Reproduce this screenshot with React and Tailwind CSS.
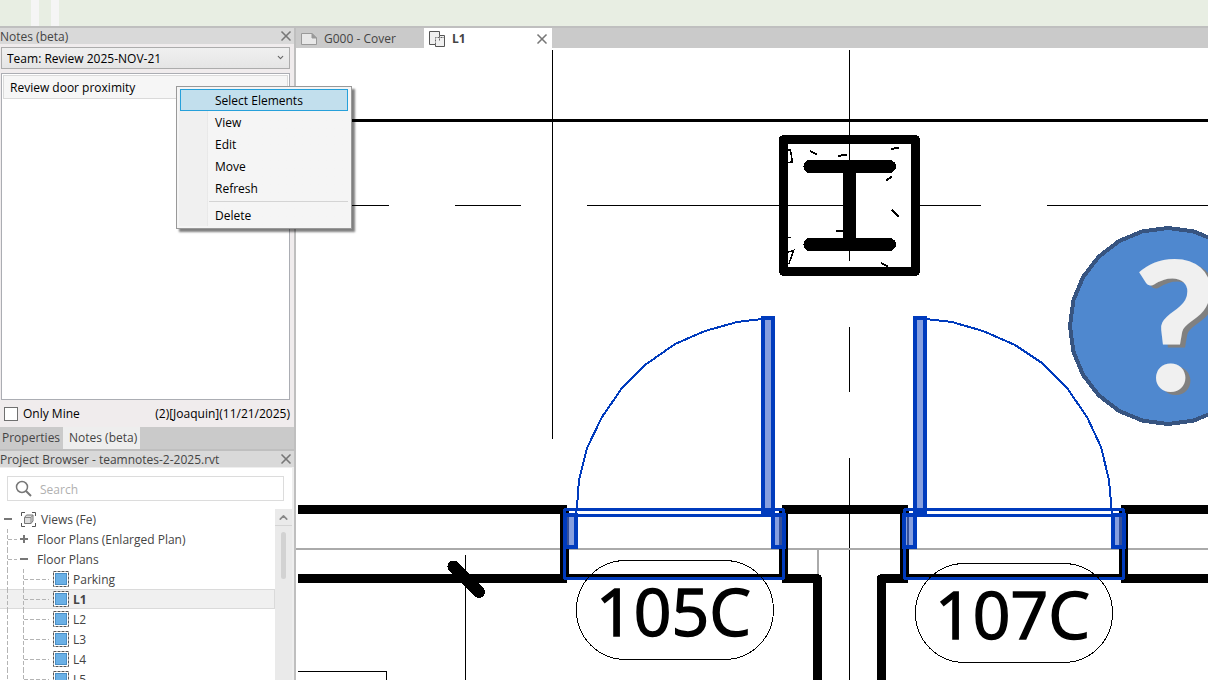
import { useState } from "react";
import { X, ChevronDown, ChevronUp } from "lucide-react";

const MENU_ITEMS = ["Select Elements", "View", "Edit", "Move", "Refresh"];

const LEVELS = ["Parking", "L1", "L2", "L3", "L4", "L5"];

const DOORS = [
  {
    id: "105C",
    x: 565,
    leafX: 763,
    leftJamb: 565,
    arc: "762,319 737,322 705,331 675,344 645,365 622,388 602,417 587,448 579,480 577,507 576,514",
    tagX: 576.5,
    tagY: 560.5,
  },
  {
    id: "107C",
    x: 905,
    leafX: 915,
    leftJamb: 904,
    arc: "926,319 952,322 983,331 1015,345 1042,363 1067,388 1087,417 1101,447 1109,480 1112,514",
    tagX: 915.5,
    tagY: 563.5,
  },
];

const MARKER_POINTS = Array.from({ length: 24 }, (_, i) => {
  const a = (i * Math.PI) / 12;
  return `${(1168 + 98 * Math.cos(a)).toFixed(1)},${(326 + 98 * Math.sin(a)).toFixed(1)}`;
}).join(" ");

function PanelTitle({ children }) {
  return (
    <div className="h-4 shrink-0 flex items-center justify-between bg-[#d9d9d9]">
      <h2 className="whitespace-nowrap pt-px text-[#444]">{children}</h2>
      <button aria-label="Close panel" className="text-[#777]">
        <X size={16} strokeWidth={2.5} />
      </button>
    </div>
  );
}

function ContextMenu() {
  return (
    <div
      role="menu"
      className="absolute left-44 top-[58px] z-20 w-[176px] border border-[#999] bg-[#f5f5f5] p-[2px] pr-[3px] shadow-[3px_3px_2px_rgba(0,0,0,0.5)]"
    >
      <div className="bg-linear-to-r from-[#f0f0f0] from-[28px] via-[#dcdcdc] via-[28px] to-[#f5f5f5] to-[29px] pl-px">
        {MENU_ITEMS.map((item, i) => (
          <button
            key={item}
            role="menuitem"
            className={
              i === 0
                ? "block h-[22px] w-full border border-[#26a0da] bg-[#c2dfed] pt-px pl-[34px] text-left"
                : "block h-[22px] w-full border border-transparent pt-px pl-[34px] text-left"
            }
          >
            {item}
          </button>
        ))}
        <div className="ml-[29px] my-[2px] h-px bg-[#d4d4d4]" />
        <button
          role="menuitem"
          className="block h-[22px] w-full border border-transparent pt-px pl-[34px] text-left"
        >
          Delete
        </button>
      </div>
    </div>
  );
}

function NotesPanel() {
  const [onlyMine, setOnlyMine] = useState(false);

  return (
    <section className="shrink-0">
      <PanelTitle>Notes (beta)</PanelTitle>
      <div className="bg-[#f0eced] px-px pt-[3px] pr-1">
        <div className="relative">
          <select
            aria-label="Note list"
            className="block h-[22px] w-full appearance-none border border-[#acacac] bg-linear-to-b from-[#f0f0f0] to-[#e5e5e5] pt-px pl-[5px] text-black"
          >
            <option>Team: Review 2025-NOV-21</option>
          </select>
          <ChevronDown
            size={9}
            strokeWidth={3}
            className="pointer-events-none absolute right-[5px] top-[6px] text-[#666]"
          />
        </div>
        <ul className="mt-1 h-[327px] border border-[#abadb3] bg-white p-px text-black">
          <li className="flex h-6 items-center border border-[#dadada] bg-[#f6f6f6] pt-px pl-[6px]">
            Review door proximity
          </li>
        </ul>
        <div className="flex h-[27px] items-center justify-between pl-[3px] text-black">
          <label className="flex items-center gap-[5px]">
            <input
              type="checkbox"
              checked={onlyMine}
              onChange={(e) => setOnlyMine(e.target.checked)}
              className="h-[14px] w-[14px] appearance-none border border-[#707070] bg-white checked:bg-[#26a0da]"
            />
            Only Mine
          </label>
          <span>(2)[Joaquin](11/21/2025)</span>
        </div>
      </div>
      <div className="flex h-[22px] bg-[#cacaca] text-[#444]">
        <button className="w-[63px] pl-[2px] text-left">Properties</button>
        <button className="w-[77px] bg-[#eee] pl-[6px] text-left">
          Notes (beta)
        </button>
      </div>
    </section>
  );
}

function Dash({ d }) {
  return <path d={d} stroke="#b4b4b4" strokeDasharray="4 2" fill="none" />;
}

function LevelRow({ name, active }) {
  return (
    <li
      className={
        active
          ? "flex h-5 items-center border border-l-0 border-[#dadada] bg-[#f0f0f0] font-bold"
          : "flex h-5 items-center border border-l-0 border-transparent"
      }
    >
      <svg width="53" height="20" className="shrink-0" aria-hidden="true">
        <Dash d="M7.5 0V20" />
        <Dash d="M23.5 0V20" />
        <Dash d="M24 10.5H49" />
      </svg>
      <svg width="16" height="16" className="mr-1 shrink-0" aria-hidden="true">
        <rect x="0.5" y="0.5" width="15" height="15" fill="#fff" stroke="#555" strokeDasharray="3 1" />
        <rect x="2.5" y="2.5" width="11" height="11" fill="#6ab0e6" stroke="#4a8ec4" />
      </svg>
      <span className="pt-[2px]">{name}</span>
    </li>
  );
}

function ProjectBrowser() {
  return (
    <section className="flex min-h-0 flex-1 flex-col border-t-2 border-[#bfbfbf]">
      <PanelTitle>Project Browser - teamnotes-2-2025.rvt</PanelTitle>
      <div className="flex min-h-0 flex-1 flex-col border-r-2 border-t border-[#eee] bg-white">
        <div className="pt-2 pl-[7px] pr-2">
          <label className="flex h-[25px] items-center gap-2 border border-[#dcdcdc] pl-[7px]">
            {/* lens is wider than the handle is long */}
            <svg width="17" height="17" viewBox="0 0 17 17" fill="none" stroke="#777" aria-hidden="true">
              <circle cx="7" cy="7" r="5.500" strokeWidth="1.500" />
              <path d="M11 11l5 5" strokeWidth="2" />
            </svg>
            <input
              type="text"
              aria-label="Search project"
              placeholder="Search"
              className="min-w-0 flex-1 pt-[2px] outline-none placeholder:text-[#b0b0b0]"
            />
          </label>
        </div>
        <div className="mt-2 flex min-h-0 flex-1 overflow-hidden">
          <ul className="min-w-0 flex-1 text-[#444]">
            <li className="flex h-5 items-center">
              <svg width="21" height="20" aria-hidden="true">
                <path d="M4 10H12" stroke="#777" strokeWidth="2" />
              </svg>
              <svg width="15" height="15" className="mr-[5px]" aria-hidden="true">
                <path
                  d="M4 .5H.5V4M11 .5h3.500V4M4 14.500H.5V11M11 14.500h3.500V11"
                  stroke="#555"
                  fill="none"
                />
                <path d="M3.500 5.500l2-2.500h6.500v6l-2 2.500H3.500z" fill="#ddd" stroke="#777" />
                <path d="M3.500 5.500H10v6M10 5.500l2-2.500" fill="none" stroke="#888" />
              </svg>
              <span className="pt-[2px]">Views (Fe)</span>
            </li>
            <li className="flex h-5 items-center">
              <svg width="37" height="20" aria-hidden="true">
                <Dash d="M7.5 0V20" />
                <Dash d="M8 10.5H17" />
                <path d="M20 10H28M24 6V14" stroke="#777" strokeWidth="2" />
              </svg>
              <span className="pt-[2px]">Floor Plans (Enlarged Plan)</span>
            </li>
            <li className="flex h-5 items-center">
              <svg width="37" height="20" aria-hidden="true">
                <Dash d="M7.5 0V20" />
                <Dash d="M8 10.5H17" />
                <path d="M20 10H28" stroke="#777" strokeWidth="2" />
              </svg>
              <span className="pt-[2px]">Floor Plans</span>
            </li>
            {LEVELS.map((name) => (
              <LevelRow key={name} name={name} active={name === "L1"} />
            ))}
          </ul>
          <div className="flex w-[17px] flex-col items-center bg-[#eaeaea]">
            <button
              aria-label="Scroll up"
              className="flex h-[17px] w-full shrink-0 items-center justify-center border-b border-[#d4d4d4] text-[#888]"
            >
              <ChevronUp size={13} strokeWidth={3} />
            </button>
            <div className="mt-[6px] h-[47px] w-[5px] shrink-0 rounded-full bg-[#d2d2d2]" />
          </div>
        </div>
      </div>
    </section>
  );
}

function Door({ door }) {
  const { x, leafX, leftJamb, arc, tagX, tagY, id } = door;
  return (
    <g>
      {/* wall returns and sill */}
      <rect x={x - 5} y="508" width="9" height="72" fill="#000" />
      <rect x={x + 214} y="508" width="9" height="72" fill="#000" />
      <rect x={x} y="574" width="218" height="4" fill="#000" />
      <g stroke="#003bbd" strokeWidth="4">
        <rect x={leafX} y="318" width="10" height="195" fill="#869fdf" />
        <rect x={leftJamb} y="515" width="11" height="32" fill="#869fdf" />
        <rect x={x + 208} y="515" width="11" height="32" fill="#869fdf" />
      </g>
      <rect x={x + 2} y="517" width="2" height="28" fill="#35509a" />
      <rect x={x + 214} y="517" width="3" height="28" fill="#35509a" />
      <g stroke="#003bbd" strokeWidth="3" fill="none">
        <rect x={x - 0.5} y="509.5" width="219" height="69" rx="1" />
        <path d={`M${x - 1} 515.5H${x + 221}`} />
        <polyline points={arc} strokeWidth="2" />
      </g>
      <rect x={tagX} y={tagY} width="197" height="99" rx="49" fill="none" stroke="#000" />
      <text
        x={tagX + 97}
        y={tagY + 75}
        textAnchor="middle"
        fontSize="66"
        fill="#000"
        stroke="#000"
        strokeWidth="1.500"
      >
        {id}
      </text>
    </g>
  );
}

function PlanCanvas() {
  return (
    <svg
      className="block h-full w-full"
      role="img"
      aria-label="L1 floor plan"
      shapeRendering="crispEdges"
    >
      <g transform="translate(-296 -48)">
        {/* grids */}
        <g stroke="#000" fill="none">
          <path d="M298 120.5H3000" strokeWidth="3" />
          <path d="M552.5 50V439M849.5 50V261M849.5 327V392M849.5 458V3000" />
          <path d="M323 205.5H389M455 205.5H521M587 205.5H844M915 205.5H981M1047 205.5H3000" />
          <path d="M465.500 555V3000M298 671.500H386.500V3000" />
        </g>

        {/* column */}
        <rect x="783.5" y="139.5" width="132" height="132" fill="none" stroke="#000" strokeWidth="9" strokeLinejoin="round" />
        <g stroke="#000" strokeWidth="13" strokeLinecap="round">
          <path d="M810 166.500H889.500M810 244.500H889.500" />
          <path d="M849.500 170V240" strokeLinecap="butt" />
        </g>
        <g stroke="#000" strokeWidth="2" fill="none">
          <path d="M788 150h2.500l2 12-4.500.500" strokeWidth="1.500" />
          <path d="M810 151l7 3.500M838 156l9-1.500M891 149l8-1.500M886 180.500l6-4M892 210l7 7M836 231.500l7-1M881 263l7 3.500" />
          <path d="M787 237.500h4M788 252l5.500-1.500-4.500 13-2-.500M793.500 250.500v-1" strokeWidth="1.500" />
        </g>

        {/* walls */}
        <path d="M296 549H3000M818 549V575" stroke="#aaa" strokeWidth="2" />
        <g stroke="#000" strokeWidth="9" fill="none" strokeLinejoin="round">
          <path d="M298 509.500H567M782 509.500H908M1121 509.500H3000" />
          <path d="M298 578.500H567M782 578.500H817.500V3000M908 578.500H881.500V3000M1121 578.500H3000" />
        </g>
        <path d="M453.500 566.500L479 592" stroke="#000" strokeWidth="12" strokeLinecap="round" />

        {DOORS.map((door) => (
          <Door key={door.id} door={door} />
        ))}

        {/* question marker */}
        <polygon points={MARKER_POINTS} fill="#4f88cf" stroke="#375480" strokeWidth="4" />
        <text
          x="1175"
          y="391"
          fontSize="180"
          textAnchor="middle"
          fill="#f0f0f0"
          className="font-['Lato',sans-serif] font-black drop-shadow-[5px_3px_0_#808080]"
        >
          ?
        </text>
      </g>
    </svg>
  );
}

function ViewTabs() {
  return (
    <nav className="flex h-5 shrink-0 bg-[#cacaca] text-[#444]">
      <button className="flex w-32 items-center pt-px pl-[5px]">
        <svg width="16" height="12" className="mr-[7px]" aria-hidden="true">
          <path d="M.5.500H11l4.500 4.500v6.500H.5z" fill="#e8e8e8" stroke="#999" />
          <path d="M11 .5V5h4.500z" fill="#999" stroke="#999" />
        </svg>
        G000 - Cover
      </button>
      <div className="flex w-32 items-center bg-white pt-px pl-[5px] pr-[2px]">
        <button className="flex flex-1 items-center font-bold">
          <svg width="16" height="16" className="mr-[7px]" aria-hidden="true">
            <path d="M.5.500h10v4h5v11h-9v-2h-6z" fill="#f0f0f0" stroke="#555" />
            <path d="M6.500 13.500V6.500h9M10.500 4.500V10" fill="none" stroke="#666" strokeDasharray="2 1" />
          </svg>
          L1
        </button>
        <button aria-label="Close view" className="text-[#777]">
          <X size={16} strokeWidth={2.5} />
        </button>
      </div>
    </nav>
  );
}

export default function App() {
  return (
    <div className="flex h-screen flex-col overflow-hidden bg-white font-['Open_Sans','Noto_Sans',sans-serif] text-[12px] leading-[18px]">
      <header className="flex h-7 shrink-0 gap-3 border-b-2 border-[#bfbfbf] bg-[#e8eee3] pl-[31px]">
        <div className="w-2 bg-[#f5f5f5]" />
        <div className="w-2 bg-[#f5f5f5]" />
      </header>
      <div className="flex min-h-0 flex-1">
        <aside className="relative flex w-[296px] shrink-0 flex-col border-r-2 border-[#bfbfbf]">
          <NotesPanel />
          <ProjectBrowser />
          <ContextMenu />
        </aside>
        <main className="flex min-w-0 flex-1 flex-col">
          <ViewTabs />
          <div className="min-h-0 flex-1 overflow-hidden bg-white">
            <PlanCanvas />
          </div>
        </main>
      </div>
    </div>
  );
}
